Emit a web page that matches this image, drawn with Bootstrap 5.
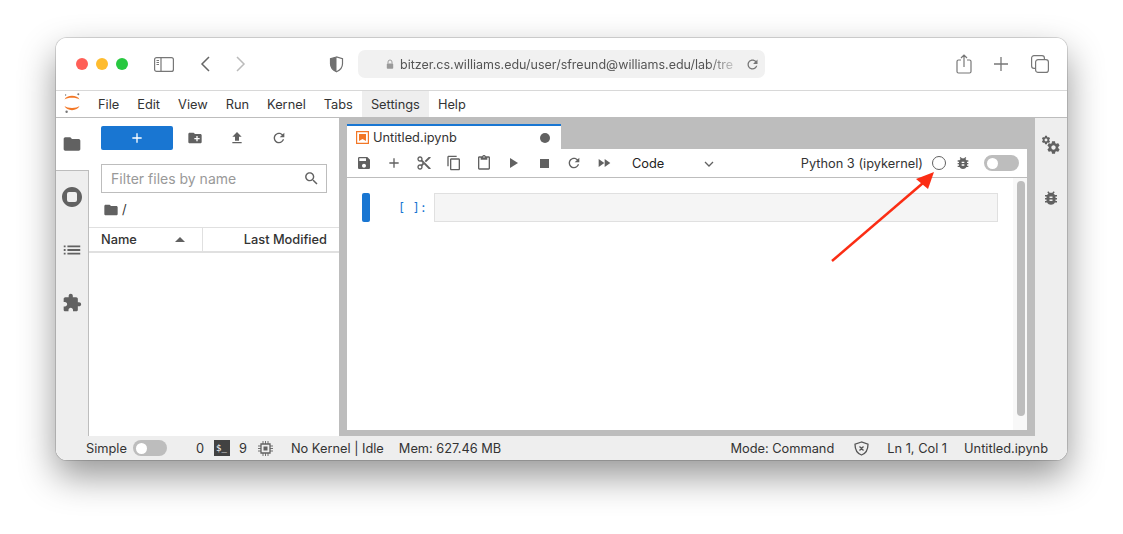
<!DOCTYPE html>
<html lang="en">
<head>
<meta charset="utf-8">
<title>JupyterLab</title>
<link href="https://cdn.jsdelivr.net/npm/bootstrap@5.3.0/dist/css/bootstrap.min.css" rel="stylesheet">
<style>
html,body{margin:0;height:534px;overflow:hidden;background:#fff;}
body{font-family:Inter,"Liberation Sans",sans-serif;font-size:12.8px;color:#333;position:relative;}
svg{display:block;flex:none;fill:#616161;}
.win{position:relative;margin:38px 0 0 56px;width:1011px;height:422px;border-radius:11px;overflow:hidden;background:#fff;}
.winshadow{position:absolute;left:56px;top:38px;width:1011px;height:422px;border-radius:11px;box-shadow:0 0 0 1px rgba(0,0,0,.14),0 16px 36px rgba(0,0,0,.42);}
.safari{height:53px;border-bottom:1px solid #d8d8d8;padding-left:20px;}
.light{width:12px;height:12px;border-radius:50%;}
.light-red{background:#ff5f57;}
.light-amber{background:#febc2e;}
.light-green{background:#28c840;}
.sb-ic{margin-left:26px;fill:none;stroke:#777;stroke-width:1.2;}
.back-ic{margin-left:26px;fill:none;stroke:#666;stroke-width:1.5;}
.fwd-ic{margin-left:24px;fill:none;stroke:#bbb;stroke-width:1.5;}
.shield-ic{margin-left:83px;fill:none;}
.urlbar{margin-left:14px;width:407px;height:28px;background:#f1f1f1;border-radius:7px;color:#555;font-size:12.5px;padding:0 5px 0 28px;}
.lock-ic{fill:#999;}
.urltext{width:334px;margin-left:6px;padding-top:2px;white-space:nowrap;-webkit-mask-image:linear-gradient(90deg,#000 92%,rgba(0,0,0,.25));mask-image:linear-gradient(90deg,#000 92%,rgba(0,0,0,.25));}
.reload-ic{fill:#777;}
.share-ic{margin-left:191px;fill:none;stroke:#777;stroke-width:1.2;}
.plus-ic{margin-left:22px;fill:none;stroke:#777;stroke-width:1.3;}
.tabs-ic{margin-left:23px;fill:none;stroke:#777;stroke-width:1.2;}
.menubar{height:27px;border-bottom:1px solid #bdbdbd;padding-left:33px;}
.logo{position:absolute;left:7px;top:2px;}
.logo-or{fill:#f37726;}
.logo-gr{fill:#767677;}
.mitem{padding:2px 9px 0;height:26px;display:flex;align-items:center;}
.mitem.on{background:#eee;}
.mainrow{height:318px;}
.leftbar{width:33px;background:#eee;border-right:1px solid #bdbdbd;}
.lefttab{height:53px;background:#fff;margin-right:-1px;border-bottom:1px solid #bdbdbd;padding-top:16px;}
.lefttab svg{margin-left:-2px;}
.lefticon{height:53px;padding-bottom:2px;}
.filepanel{width:250px;background:#fff;}
.ftools{height:46px;padding:8px 0 0 12px;}
.newbtn{width:72px;height:24px;background:#1976d2;border:0;border-radius:2px;padding:0;}
.plus-w{fill:#fff;}
.ftool-row{height:24px;margin-left:1px;}
.ficon{width:42px;}
.filter{margin:0 12px;height:29px;border:1px solid #bdbdbd;padding:0 6px 0 9px;color:#999;font-size:14px;}
.crumb{height:34px;padding-left:14px;gap:3px;}
.fhead{height:26px;border-top:1px solid #e0e0e0;border-bottom:2px solid #e0e0e0;font-weight:500;}
.hname{width:114px;padding:0 17px 0 12px;border-right:1px solid #e0e0e0;height:100%;}
.hmod{flex:1;padding-right:12px;height:100%;}
.caret{width:0;height:0;border:5px solid transparent;border-top:0;border-bottom-color:#616161;}
.dock{flex:1;background:#bdbdbd;padding:6px 8px 6px 8px;min-width:0;}
.tab{width:214px;height:25px;background:#fff;border-top:2px solid #1976d2;padding:0 11px 0 9px;}
.nb-ic{fill:#f37726;}
.nb-ic-box{fill:none;stroke:#f37726;stroke-width:1.2;}
.dot{width:10px;height:10px;border-radius:50%;background:#616161;}
.tabname{margin-left:4px;flex:1;padding-top:1px;}
.nbtools{height:29px;background:#fff;border-bottom:1px solid #bdbdbd;padding:0 8px 0 2px;}
.tbi{width:30px;}
.celltype{margin-left:13px;width:94px;padding:2px 12px 0 0;color:#222;}
.chev{fill:none;stroke:#616161;stroke-width:1.3;}
.kname{margin-left:auto;color:#333;padding-top:2px;}
.kcircle{width:14px;height:14px;border:1px solid #616161;border-radius:50%;margin-left:9px;}
.kbug{margin-left:9px;margin-right:13px;}
.tgl{width:35px;height:16px;border-radius:8px;background:#bdbdbd;padding-left:3px;}
.knob{width:11px;height:11px;border-radius:50%;background:#fff;}
.nbbody{height:252px;background:#fff;}
.cellarea{flex:1;padding:15px 15px 0 15px;min-width:0;}
.cellbar{width:8px;height:29px;background:#1976d2;border-radius:2px;}
.prompt{width:64px;height:29px;padding-right:7px;font-family:"DejaVu Sans Mono","Liberation Mono",monospace;color:#1976d2;font-size:12px;}
.cellinput{flex:1;height:29px;background:#f5f5f5;border:1px solid #e0e0e0;}
.sbar{width:14px;background:#f8f8f8;padding:3px 2px 14px 4px;}
.thumb{height:235px;border-radius:4px;background:#bdbdbd;}
.rightbar{width:32px;background:#eee;}
.righticon{height:53px;}
.status{height:24px;background:#eee;padding:0 19px 0 30px;white-space:nowrap;}
.status span{padding-top:2px;}
.stoggle{margin-left:6px;width:34px;}
.gap-29{margin-left:29px;}
.gap-10{margin-left:10px;}
.gap-9{margin-left:9px;}
.gap-11{margin-left:11px;}
.gap-18{margin-left:18px;}
.gap-15{margin-left:15px;}
.gap-20{margin-left:20px;}
.gap-17{margin-left:17px;}
.termic{width:16px;height:16px;background:#424242;color:#fff;font:9px "DejaVu Sans Mono",monospace;padding-left:2px;}
.chip-line{fill:none;stroke:#616161;stroke-width:1.3;}
.chip-pin{stroke:#616161;stroke-width:.9;}
.sh-st{fill:none;stroke:#555;stroke-width:1.3;}
.arrow{position:absolute;left:825px;top:165px;}
.ar-line{stroke:#fb2d14;stroke-width:2.5;fill:none;}
.ar-head{fill:#fb2d14;}
</style>
</head>
<body>
<svg width="0" height="0" class="position-absolute">
<defs>
<symbol id="i-folder" viewBox="0 0 24 24"><path d="M10 4H4c-1.1 0-1.99.9-1.99 2L2 18c0 1.1.9 2 2 2h16c1.100 0 2-.9 2-2V8c0-1.100-.9-2-2-2h-8l-2-2z"/></symbol>
<symbol id="i-save" viewBox="0 0 24 24"><path d="M17 3H5c-1.11 0-2 .9-2 2v14c0 1.1.89 2 2 2h14c1.1 0 2-.9 2-2V7l-4-4zm-5 16c-1.66 0-3-1.34-3-3s1.34-3 3-3 3 1.34 3 3-1.34 3-3 3zm3-10H5V5h10v4z"/></symbol>
<symbol id="i-add" viewBox="0 0 24 24"><path d="M19 13h-6v6h-2v-6H5v-2h6V5h2v6h6v2z"/></symbol>
<symbol id="i-cut" viewBox="0 0 24 24"><path d="M9.64 7.64c.23-.5.36-1.05.36-1.64 0-2.21-1.79-4-4-4S2 3.79 2 6s1.79 4 4 4c.59 0 1.14-.13 1.64-.36L10 12l-2.36 2.36C7.14 14.13 6.59 14 6 14c-2.21 0-4 1.79-4 4s1.790 4 4 4 4-1.790 4-4c0-.59-.13-1.14-.36-1.64L12 14l7 7h3v-1L9.640 7.640zM6 8c-1.100 0-2-.89-2-2s.9-2 2-2 2 .89 2 2-.9 2-2 2zm0 12c-1.100 0-2-.89-2-2s.9-2 2-2 2 .89 2 2-.9 2-2 2zm6-7.500c-.28 0-.5-.22-.5-.5s.22-.5.5-.5.5.22.5.5-.22.5-.5.5zM19 3l-6 6 2 2 7-7V3z"/></symbol>
<symbol id="i-copy" viewBox="0 0 24 24"><path d="M16 1H4c-1.1 0-2 .9-2 2v14h2V3h12V1zm3 4H8c-1.1 0-2 .9-2 2v14c0 1.1.9 2 2 2h11c1.1 0 2-.9 2-2V7c0-1.1-.9-2-2-2zm0 16H8V7h11v14z"/></symbol>
<symbol id="i-paste" viewBox="0 0 24 24"><path d="M19 2h-4.180C14.400.84 13.300 0 12 0c-1.300 0-2.400.84-2.820 2H5c-1.100 0-2 .9-2 2v16c0 1.100.9 2 2 2h14c1.100 0 2-.9 2-2V4c0-1.100-.9-2-2-2zm-7 0c.55 0 1 .45 1 1s-.45 1-1 1-1-.45-1-1 .45-1 1-1zm7 18H5V4h2v3h10V4h2v16z"/></symbol>
<symbol id="i-refresh" viewBox="0 0 24 24"><path d="M17.650 6.350C16.200 4.900 14.210 4 12 4c-4.420 0-7.990 3.580-7.990 8s3.570 8 7.990 8c3.730 0 6.840-2.550 7.730-6h-2.080c-.82 2.330-3.040 4-5.650 4-3.310 0-6-2.690-6-6s2.690-6 6-6c1.660 0 3.140.69 4.220 1.780L13 11h7V4l-2.350 2.350z"/></symbol>
<symbol id="i-ff" viewBox="0 0 24 24"><path d="M4 18l8.500-6L4 6v12zm9-12v12l8.500-6L13 6z"/></symbol>
<symbol id="i-upload" viewBox="0 0 24 24"><path d="M9 16h6v-6h4l-7-7-7 7h4zm-4 2h14v2H5z"/></symbol>
<symbol id="i-newfolder" viewBox="0 0 24 24"><path d="M20 6h-8l-2-2H4c-1.110 0-1.990.89-1.990 2L2 18c0 1.110.89 2 2 2h16c1.110 0 2-.89 2-2V8c0-1.110-.89-2-2-2zm-1 8h-3v3h-2v-3h-3v-2h3V9h2v3h3v2z"/></symbol>
<symbol id="i-search" viewBox="0 0 24 24"><path d="M15.500 14h-.79l-.28-.27C15.410 12.590 16 11.110 16 9.500 16 5.910 13.090 3 9.500 3S3 5.910 3 9.500 5.910 16 9.500 16c1.610 0 3.090-.59 4.230-1.570l.27.28v.79l5 4.990L20.490 19l-4.990-5zm-6 0C7.010 14 5 11.990 5 9.500S7.010 5 9.500 5 14 7.010 14 9.500 11.990 14 9.500 14z"/></symbol>
<symbol id="i-stopc" viewBox="0 0 24 24"><path fill-rule="evenodd" d="M12 2C6.480 2 2 6.480 2 12s4.480 10 10 10 10-4.480 10-10S17.520 2 12 2zM9 7h6a2 2 0 0 1 2 2v6a2 2 0 0 1-2 2H9a2 2 0 0 1-2-2V9a2 2 0 0 1 2-2z"/></symbol>
<symbol id="i-list" viewBox="0 0 24 24"><path d="M3 13h2v-2H3v2zm0 4h2v-2H3v2zm0-8h2V7H3v2zm4 4h14v-2H7v2zm0 4h14v-2H7v2zM7 7v2h14V7H7z"/></symbol>
<symbol id="i-ext" viewBox="0 0 24 24"><path d="M20.500 11H19V7c0-1.100-.9-2-2-2h-4V3.500C13 2.120 11.880 1 10.500 1S8 2.120 8 3.500V5H4c-1.100 0-1.990.9-1.990 2v3.800H3.500c1.490 0 2.700 1.210 2.700 2.700s-1.210 2.700-2.700 2.700H2V20c0 1.100.9 2 2 2h3.800v-1.500c0-1.490 1.210-2.700 2.700-2.700 1.490 0 2.700 1.210 2.700 2.700V22H17c1.100 0 2-.9 2-2v-4h1.500c1.380 0 2.500-1.120 2.500-2.500S21.880 11 20.500 11z"/></symbol>
<symbol id="i-bug" viewBox="0 0 24 24"><path d="M20 8h-2.810c-.45-.78-1.070-1.450-1.820-1.960L17 4.410 15.590 3l-2.170 2.170C12.960 5.060 12.490 5 12 5c-.49 0-.96.06-1.410.17L8.410 3 7 4.410l1.620 1.630C7.880 6.550 7.260 7.220 6.810 8H4v2h2.090c-.05.33-.09.66-.09 1v1H4v2h2v1c0 .34.04.67.09 1H4v2h2.810c1.040 1.790 2.970 3 5.190 3s4.150-1.210 5.190-3H20v-2h-2.090c.05-.33.09-.66.09-1v-1h2v-2h-2v-1c0-.34-.04-.67-.09-1H20V8zm-6 8h-4v-2h4v2zm0-4h-4v-2h4v2z"/></symbol>
<symbol id="i-gear" viewBox="0 0 24 24"><path d="M19.430 12.980c.04-.32.07-.64.07-.98s-.03-.66-.07-.98l2.110-1.650c.19-.15.24-.42.12-.64l-2-3.460c-.12-.22-.39-.3-.61-.22l-2.490 1c-.52-.4-1.080-.73-1.690-.98l-.38-2.650C14.460 2.180 14.250 2 14 2h-4c-.25 0-.46.18-.49.42l-.38 2.650c-.61.25-1.170.59-1.690.98l-2.490-1c-.23-.09-.49 0-.61.22l-2 3.460c-.13.22-.07.49.12.64l2.110 1.650c-.04.32-.07.65-.07.98s.03.66.07.98l-2.110 1.650c-.19.15-.24.42-.12.64l2 3.460c.12.22.39.3.61.22l2.490-1c.52.4 1.080.73 1.690.98l.38 2.650c.03.24.24.42.49.42h4c.25 0 .46-.18.49-.42l.38-2.650c.61-.25 1.170-.59 1.690-.98l2.490 1c.23.09.49 0 .61-.22l2-3.460c.12-.22.07-.49-.12-.64l-2.110-1.650zM12 15.500c-1.930 0-3.500-1.570-3.500-3.500s1.570-3.500 3.500-3.500 3.500 1.570 3.500 3.500-1.570 3.500-3.500 3.500z"/></symbol>
</defs>
</svg>
<div class="winshadow"></div>
<div class="win d-flex flex-column">
  <div class="safari d-flex align-items-center">
    <div class="light light-red"></div>
    <div class="light light-amber ms-2"></div>
    <div class="light light-green ms-2"></div>
    <svg class="sb-ic" width="20" height="15" viewBox="0 0 20 15"><rect x=".6" y=".6" width="18.800" height="13.800" rx="2"/><path d="M7 .6v13.800"/><path stroke-width="1" d="M2.500 3.500h2.500M2.500 5.500h2.500M2.500 7.500h2.500"/></svg>
    <svg class="back-ic" width="11" height="16" viewBox="0 0 11 16"><path d="M9 1 2 8l7 7"/></svg>
    <svg class="fwd-ic" width="11" height="16" viewBox="0 0 11 16"><path d="m2 1 7 7-7 7"/></svg>
    <svg class="shield-ic" width="15" height="17" viewBox="0 0 15 17"><path d="M7.500 1 1.500 2.800v5c0 4 3 6.700 6 8 3-1.300 6-4 6-8v-5z" stroke="#707070" stroke-width="1.200"/><path d="M7.500 1 1.500 2.800v5c0 4 3 6.700 6 8z" fill="#707070"/></svg>
    <div class="urlbar d-flex align-items-center">
      <svg class="lock-ic" width="8" height="12" viewBox="0 0 10 13"><path d="M2.500 6V4a2.500 2.500 0 0 1 5 0v2" fill="none" stroke="#999" stroke-width="1.200"/><rect x="1" y="6" width="8" height="6.500" rx="1"/></svg>
      <div class="urltext">bitzer.cs.williams.edu/user/sfreund@williams.edu/lab/tre</div>
      <svg class="reload-ic ms-auto" width="15" height="15" viewBox="0 0 24 24"><use href="#i-refresh"/></svg>
    </div>
    <svg class="share-ic" width="16" height="20" viewBox="0 0 16 20"><path d="M5 6H2.500a1.500 1.500 0 0 0-1.500 1.500v10A1.500 1.500 0 0 0 2.500 19h11a1.500 1.500 0 0 0 1.500-1.500v-10A1.500 1.500 0 0 0 13.500 6H11M8 13V1M5 4l3-3 3 3"/></svg>
    <svg class="plus-ic" width="14" height="14" viewBox="0 0 14 14"><path d="M7 0v14M0 7h14"/></svg>
    <svg class="tabs-ic" width="18" height="18" viewBox="0 0 18 18"><rect x="4.600" y="4.600" width="12.800" height="12.800" rx="2.500"/><path d="M4.600 13.400H3A2.400 2.400 0 0 1 .6 11V3A2.400 2.400 0 0 1 3 .6h8A2.400 2.400 0 0 1 13.400 3v1.600"/></svg>
  </div>
  <div class="menubar d-flex align-items-center position-relative">
    <svg class="logo" width="18" height="21" viewBox="0 0 18 21"><path class="logo-or" d="M1.500 6.500C3.500 1.500 14.500 1.500 16.500 6.500 13.500 4 4.500 4 1.500 6.500zM1.500 13c2 5.500 13 5.500 15 0C13.500 15.500 4.500 15.500 1.500 13z"/><circle class="logo-gr" cx="15.300" cy="1.200" r="1"/><circle class="logo-gr" cx="3.600" cy="18.800" r="1.200"/><circle class="logo-gr" cx="2.600" cy="2" r=".7"/></svg>
    <div class="mitem">File</div><div class="mitem">Edit</div><div class="mitem">View</div><div class="mitem">Run</div><div class="mitem">Kernel</div><div class="mitem">Tabs</div><div class="mitem on">Settings</div><div class="mitem">Help</div>
  </div>
  <div class="mainrow d-flex">
    <div class="leftbar d-flex flex-column">
      <div class="lefttab d-flex justify-content-center"><svg width="20" height="20"><use href="#i-folder"/></svg></div>
      <div class="lefticon d-flex align-items-center justify-content-center"><svg width="24" height="24"><use href="#i-stopc"/></svg></div>
      <div class="lefticon d-flex align-items-center justify-content-center"><svg width="22" height="22"><use href="#i-list"/></svg></div>
      <div class="lefticon d-flex align-items-center justify-content-center"><svg width="20" height="20"><use href="#i-ext"/></svg></div>
    </div>
    <div class="filepanel d-flex flex-column">
      <div class="ftools d-flex align-items-start">
        <button class="newbtn d-flex align-items-center justify-content-center" aria-label="New launcher"><svg class="plus-w" width="16" height="16"><use href="#i-add"/></svg></button>
        <div class="ftool-row d-flex align-items-center">
          <div class="ficon d-flex justify-content-center"><svg width="16" height="16"><use href="#i-newfolder"/></svg></div>
          <div class="ficon d-flex justify-content-center"><svg width="16" height="16"><use href="#i-upload"/></svg></div>
          <div class="ficon d-flex justify-content-center"><svg width="16" height="16"><use href="#i-refresh"/></svg></div>
        </div>
      </div>
      <div class="filter d-flex align-items-center justify-content-between">Filter files by name<svg width="17" height="17"><use href="#i-search"/></svg></div>
      <div class="crumb d-flex align-items-center"><svg width="16" height="16"><use href="#i-folder"/></svg><span>/</span></div>
      <div class="fhead d-flex">
        <div class="hname d-flex align-items-center justify-content-between"><span>Name</span><div class="caret"></div></div>
        <div class="hmod d-flex align-items-center justify-content-end">Last Modified</div>
      </div>
    </div>
    <div class="dock d-flex flex-column">
      <div class="tab d-flex align-items-center">
        <svg class="nb-ic" width="13" height="13" viewBox="0 0 13 13"><path class="nb-ic-box" d="M.6.6h11.800v11.800H.6z"/><path d="M3 3h7v7L6.500 8 3 10z"/></svg>
        <span class="tabname">Untitled.ipynb</span><div class="dot"></div>
      </div>
      <div class="nbtools d-flex align-items-center">
        <div class="d-flex align-items-center">
          <div class="tbi d-flex justify-content-center"><svg width="16" height="16"><use href="#i-save"/></svg></div>
          <div class="tbi d-flex justify-content-center"><svg width="16" height="16"><use href="#i-add"/></svg></div>
          <div class="tbi d-flex justify-content-center"><svg width="16" height="16"><use href="#i-cut"/></svg></div>
          <div class="tbi d-flex justify-content-center"><svg width="16" height="16"><use href="#i-copy"/></svg></div>
          <div class="tbi d-flex justify-content-center"><svg width="16" height="16"><use href="#i-paste"/></svg></div>
          <div class="tbi d-flex justify-content-center"><svg width="10" height="10" viewBox="0 0 10 10"><path d="M1 0l8 5-8 5z"/></svg></div>
          <div class="tbi d-flex justify-content-center"><svg width="9" height="9" viewBox="0 0 10 10"><path d="M0 0h10v10H0z"/></svg></div>
          <div class="tbi d-flex justify-content-center"><svg width="16" height="16"><use href="#i-refresh"/></svg></div>
          <div class="tbi d-flex justify-content-center"><svg width="16" height="16"><use href="#i-ff"/></svg></div>
        </div>
        <div class="celltype d-flex align-items-center justify-content-between">Code<svg class="chev" width="10" height="6" viewBox="0 0 10 6"><path d="m1 1 4 4 4-4"/></svg></div>
        <span class="kname">Python 3 (ipykernel)</span>
        <div class="kcircle"></div>
        <svg class="kbug" width="16" height="16"><use href="#i-bug"/></svg>
        <div class="tgl d-flex align-items-center"><div class="knob"></div></div>
      </div>
      <div class="nbbody d-flex">
        <div class="cellarea d-flex align-items-start">
          <div class="cellbar"></div>
          <div class="prompt d-flex align-items-center justify-content-end">[ ]:</div>
          <div class="cellinput"></div>
        </div>
        <div class="sbar"><div class="thumb"></div></div>
      </div>
    </div>
    <div class="rightbar d-flex flex-column">
      <div class="righticon d-flex align-items-center justify-content-center"><svg width="20" height="20" viewBox="0 0 20 20"><svg x="5" y="5" width="15" height="15" viewBox="0 0 24 24"><use href="#i-gear"/></svg><svg x="0" y="0" width="10" height="10" viewBox="0 0 24 24"><use href="#i-gear"/></svg></svg></div>
      <div class="righticon d-flex align-items-center justify-content-center"><svg width="18" height="18"><use href="#i-bug"/></svg></div>
    </div>
  </div>
  <div class="status d-flex align-items-center">
    <span>Simple</span>
    <div class="tgl stoggle d-flex align-items-center"><div class="knob"></div></div>
    <span class="gap-29">0</span>
    <div class="termic gap-10 d-flex align-items-center">$_</div>
    <span class="gap-9">9</span>
    <svg class="gap-11" width="15" height="15" viewBox="0 0 15 15"><path class="chip-line" d="M3 3h9v9H3z"/><path d="M5.500 5.500h4v4h-4z"/><path class="chip-pin" d="M5 0v3M7.500 0v3M10 0v3M5 12v3M7.500 12v3M10 12v3M0 5h3M0 7.500h3M0 10h3M12 5h3M12 7.500h3M12 10h3"/></svg>
    <span class="gap-18">No Kernel | Idle</span>
    <span class="gap-15">Mem: 627.46 MB</span>
    <span class="ms-auto">Mode: Command</span>
    <svg class="sh-st gap-20" width="15" height="15" viewBox="0 0 15 15"><path d="M7.500 1 1 3.200C1 9 3.500 12.500 7.500 14c4-1.500 6.500-5 6.500-10.800zM5.500 5.500l4 4M9.500 5.500l-4 4"/></svg>
    <span class="gap-18">Ln 1, Col 1</span>
    <span class="gap-17">Untitled.ipynb</span>
  </div>
</div>
<svg class="arrow" width="115" height="105" viewBox="0 0 115 105" aria-hidden="true"><path class="ar-line" d="M7 96 98 18"/><path class="ar-head" d="M109 7 91 14l12 10z"/></svg>
</body>
</html>
